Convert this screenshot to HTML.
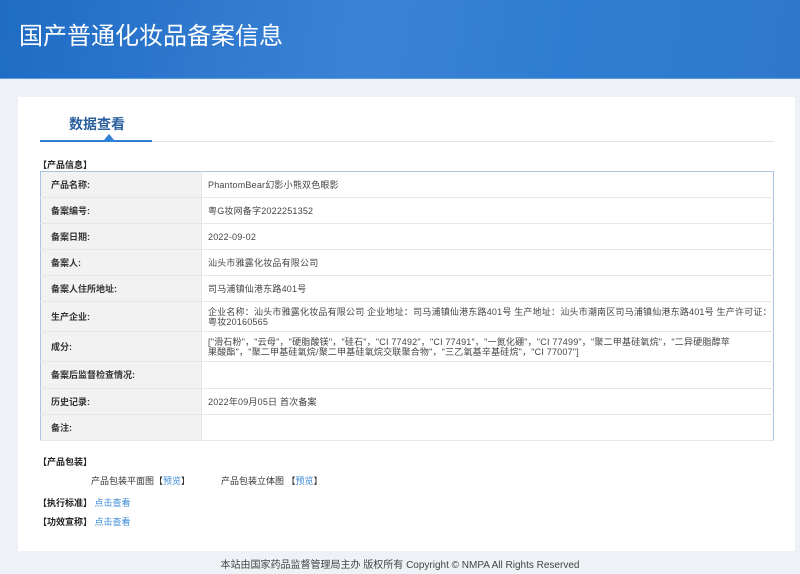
<!DOCTYPE html>
<html><head><meta charset="utf-8"><style>
*{margin:0;padding:0;box-sizing:border-box}
body{width:800px;height:574px;overflow:hidden;background:#eef1f5;font-family:"Liberation Sans","Noto Sans CJK SC",sans-serif;color:#333;position:relative}
.hd{position:absolute;left:0;top:0;width:800px;height:79px;background:linear-gradient(100deg,#1f6cc4 0%,#3a82d6 45%,#2f7dd2 70%,#2e78cc 100%);border-bottom:1px solid #5b9be0}
.hd h1{position:absolute;left:19px;top:16px;font-size:24px;font-weight:normal;color:#fff}
.card{position:absolute;left:18px;top:97px;width:777px;height:454px;background:#fff}
.tab{position:absolute;left:51px;top:17px;font-size:14px;color:#2a5f9e;font-weight:bold}
.line{position:absolute;left:22px;top:44px;width:734px;height:1px;background:#e2e2e2}
.tl{position:absolute;left:22px;top:43px;width:112px;height:2px;background:#2f7fd4}
.tri{position:absolute;left:86px;top:37px;width:0;height:0;border-left:5px solid transparent;border-right:5px solid transparent;border-bottom:6px solid #2f7fd4}
.sec{position:absolute;font-size:9px;font-weight:bold;color:#222}
table{position:absolute;left:22px;top:74px;width:734px;border-collapse:collapse;border:1px solid #a9c3e6;font-size:9px;table-layout:fixed}
td{border-bottom:1px solid #e6e6e6;vertical-align:middle;line-height:10px}
td.l{width:161px;background:#f2f2f2;font-weight:bold;padding-left:10px;color:#333;border-right:1px solid #e6e6e6}
td.v{padding-left:6px;color:#444;letter-spacing:0.2px;white-space:nowrap;overflow:hidden}
a{color:#3b8ad8;text-decoration:none}
.ft{position:absolute;left:0;top:556px;width:800px;text-align:center;font-size:10px;color:#444}
</style></head><body>
<div class="hd"><h1>国产普通化妆品备案信息</h1></div>
<div class="card">
<div class="tab">数据查看</div>
<div class="line"></div><div class="tl"></div><div class="tri"></div>
<div class="sec" style="left:20px;top:61px">【产品信息】</div>
<table>
<tr style="height:26px"><td class="l">产品名称:</td><td class="v">PhantomBear幻影小熊双色眼影</td></tr>
<tr style="height:26px"><td class="l">备案编号:</td><td class="v">粤G妆网备字2022251352</td></tr>
<tr style="height:26px"><td class="l">备案日期:</td><td class="v">2022-09-02</td></tr>
<tr style="height:26px"><td class="l">备案人:</td><td class="v">汕头市雅露化妆品有限公司</td></tr>
<tr style="height:26px"><td class="l">备案人住所地址:</td><td class="v">司马浦镇仙港东路401号</td></tr>
<tr style="height:30px"><td class="l">生产企业:</td><td class="v">企业名称：汕头市雅露化妆品有限公司 企业地址：司马浦镇仙港东路401号 生产地址：汕头市潮南区司马浦镇仙港东路401号 生产许可证：<br>粤妆20160565</td></tr>
<tr style="height:30px"><td class="l">成分:</td><td class="v">["滑石粉"，"云母"，"硬脂酸镁"，"硅石"，"CI 77492"，"CI 77491"，"一氮化硼"，"CI 77499"，"聚二甲基硅氧烷"，"二异硬脂醇苹<br>果酸酯"，"聚二甲基硅氧烷/聚二甲基硅氧烷交联聚合物"，"三乙氧基辛基硅烷"，"CI 77007"]</td></tr>
<tr style="height:27px"><td class="l">备案后监督检查情况:</td><td class="v"></td></tr>
<tr style="height:26px"><td class="l">历史记录:</td><td class="v">2022年09月05日 首次备案</td></tr>
<tr style="height:26px"><td class="l">备注:</td><td class="v"></td></tr>
</table>
<div class="sec" style="left:20px;top:358px">【产品包装】</div>
<div style="position:absolute;left:73px;top:377px;font-size:9px">产品包装平面图【<a>预览</a>】</div>
<div style="position:absolute;left:203px;top:377px;font-size:9px">产品包装立体图 【<a>预览</a>】</div>
<div class="sec" style="left:20px;top:399px">【执行标准】 <a style="font-weight:normal">点击查看</a></div>
<div class="sec" style="left:20px;top:418px">【功效宣称】 <a style="font-weight:normal">点击查看</a></div>
</div>
<div class="ft">本站由国家药品监督管理局主办 版权所有 Copyright © NMPA All Rights Reserved</div>
</body></html>
